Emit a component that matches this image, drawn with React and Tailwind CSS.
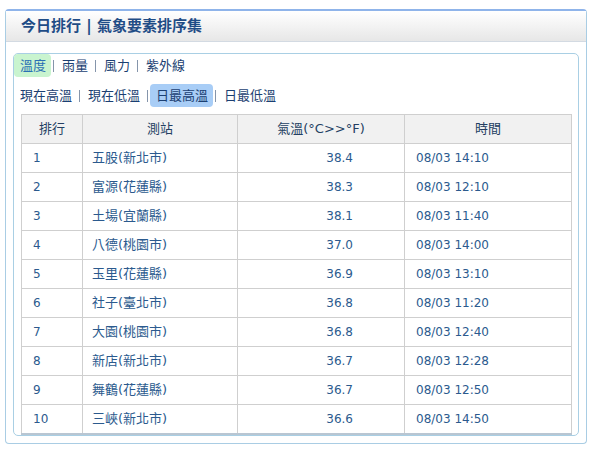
import React from "react";

const rows = [
  ["1", "五股(新北市)", "38.4", "08/03 14:10"],
  ["2", "富源(花蓮縣)", "38.3", "08/03 12:10"],
  ["3", "土場(宜蘭縣)", "38.1", "08/03 11:40"],
  ["4", "八德(桃園市)", "37.0", "08/03 14:00"],
  ["5", "玉里(花蓮縣)", "36.9", "08/03 13:10"],
  ["6", "社子(臺北市)", "36.8", "08/03 11:20"],
  ["7", "大園(桃園市)", "36.8", "08/03 12:40"],
  ["8", "新店(新北市)", "36.7", "08/03 12:28"],
  ["9", "舞鶴(花蓮縣)", "36.7", "08/03 12:50"],
  ["10", "三峽(新北市)", "36.6", "08/03 14:50"],
];

const Sep = () => <span className="mx-[2px] h-[12px] w-px bg-[#8595ab]" />;

const TabRow = ({ items, active, activeClass }) => (
  <div className="flex h-[23px] items-center text-[13px] text-[#1b3f72]">
    {items.map((t, i) => (
      <React.Fragment key={t}>
        {i > 0 && <Sep />}
        <span
          className={`flex h-[23px] items-center rounded-[4px] pl-[6px] pr-[5px] ${
            i === active ? activeClass : ""
          }`}
        >
          {t}
        </span>
      </React.Fragment>
    ))}
  </div>
);

export default function App() {
  return (
    <div className="h-[468px] w-[589px] bg-white pl-[5px] pt-[9px] font-[family-name:'DejaVu_Sans','Noto_Sans_CJK_TC',sans-serif]">
      <div className="h-[435px] w-[582px] rounded-[4px] border border-t-2 border-[#a9cde4] border-t-[#8fb4ea]">
        <div className="flex h-[31px] items-center border-b border-[#d3dae2] bg-gradient-to-b from-white to-[#e7e7e7] pl-[15px] text-[15px] font-bold text-[#1f4c86]">
          今日排行 | 氣象要素排序集
        </div>
        <div className="px-[7px] pt-[11px]">
          <div className="rounded-[5px] border border-[#a9cfe4]">
            <TabRow
              items={["溫度", "雨量", "風力", "紫外線"]}
              active={0}
              activeClass="bg-[#c9f4cf] text-[#2a70b4]"
            />
            <div className="mt-[7px]">
              <TabRow
                items={["現在高溫", "現在低溫", "日最高溫", "日最低溫"]}
                active={2}
                activeClass="bg-[#a8cdf6]"
              />
            </div>
            <div className="mt-[7px] pl-[7px]">
              <table className="w-[550px] table-fixed border-collapse border-b-2 border-b-[#b9c6d2] text-[#2b5a8e]">
                <colgroup>
                  <col className="w-[61px]" />
                  <col className="w-[155px]" />
                  <col className="w-[167px]" />
                  <col className="w-[167px]" />
                </colgroup>
                <thead>
                  <tr className="h-[29px] bg-[#f1f1f1] text-[13px] text-[#243f62]">
                    <th className="border border-[#cfcfcf] font-normal">排行</th>
                    <th className="border border-[#cfcfcf] font-normal">測站</th>
                    <th className="border border-[#cfcfcf] font-normal">氣溫(°C&gt;&gt;°F)</th>
                    <th className="border border-[#cfcfcf] font-normal">時間</th>
                  </tr>
                </thead>
                <tbody>
                  {rows.map((r) => (
                    <tr key={r[0]} className="h-[29px]">
                      <td className="border border-[#cfcfcf] pl-[11px] text-[12px]">{r[0]}</td>
                      <td className="border border-[#cfcfcf] pl-[9px] text-[13px]">{r[1]}</td>
                      <td className="border border-[#cfcfcf] pr-[51px] text-right text-[12px]">{r[2]}</td>
                      <td className="border border-[#cfcfcf] pl-[11px] text-[12px]">{r[3]}</td>
                    </tr>
                  ))}
                </tbody>
              </table>
            </div>
          </div>
        </div>
      </div>
    </div>
  );
}
